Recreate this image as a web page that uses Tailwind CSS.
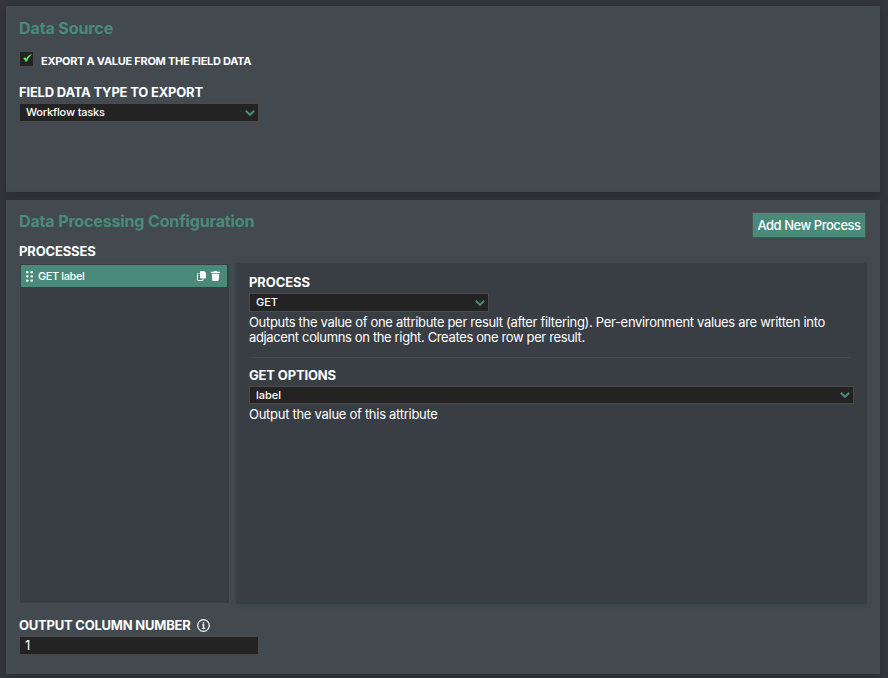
<!DOCTYPE html>
<html lang="en">
<head>
    <meta charset="UTF-8">
    <meta name="viewport" content="width=device-width, initial-scale=1.0">
    <title>Export Configuration</title>
    <script src="https://cdn.jsdelivr.net/npm/@tailwindcss/browser@4"></script>
</head>
<body class="w-[888px] h-[678px] overflow-hidden bg-[#33373f] p-1.5 font-['Inter',sans-serif] text-[13px] leading-[15px] text-white">
    <main class="flex w-[874px] flex-col gap-2">
        <!-- Data source -->
        <section class="h-[186px] bg-[#424a50] pl-[13px] pt-3 shadow-[0_3px_8px_2px_rgba(42,46,48,0.75)]">
            <h2 class="h-5 text-base leading-5 font-bold tracking-[-0.1px] text-[#4a8a79]">Data Source</h2>
            <label class="mt-[13px] flex h-4 items-start gap-[7px]">
                <span class="flex h-4 w-[15px] shrink-0 justify-end border border-[#4b4a49] bg-[#232323] pt-0.5 pr-px">
                    <svg class="h-2 w-[9px]" viewBox="0 0 9 8"><path fill="#62e566" d="M.3 4.200 2 3.300l1.200 1.400C4.400 2.600 6.200.9 8.900.1 6.700 2.200 5.200 4.600 4 7.500H2.500C1.900 6.200 1.200 5.100.3 4.200z" /></svg>
                </span>
                <span class="mt-[3px] text-[11px] font-bold tracking-[-0.28px] whitespace-nowrap">EXPORT A VALUE FROM THE FIELD DATA</span>
            </label>
            <h3 class="mt-[18px] font-bold tracking-[-0.2px] whitespace-nowrap">FIELD DATA TYPE TO EXPORT</h3>
            <div class="mt-[3px] flex h-[19px] w-60 items-center justify-between border border-[#4b4a49] bg-[#232323] pl-1.5 pr-[3px]">
                <span class="text-[11px] font-medium tracking-[-0.17px]">Workflow tasks</span>
                <svg class="h-2 w-2.5" viewBox="0 0 10 8" fill="none" stroke="#4a8a79" stroke-width="2"><path d="M.8 1.800 5 5.800l4.200-4" /></svg>
            </div>
        </section>

        <!-- Data processing configuration -->
        <section class="h-[474px] bg-[#424a50] px-[13px] pt-3 shadow-[0_3px_8px_2px_rgba(42,46,48,0.75)]">
            <div class="flex h-[31px] items-start justify-between">
                <h2 class="-mt-px text-base leading-5 font-bold tracking-[-0.14px] whitespace-nowrap text-[#4a8a79]">Data Processing Configuration</h2>
                <button class="mr-px h-[26px] w-[114px] border border-[#505351] bg-[#4a8a79] font-medium tracking-[-0.47px] whitespace-nowrap">Add New Process</button>
            </div>
            <h3 class="mt-px font-bold tracking-[-0.15px]">PROCESSES</h3>
            <div class="mt-1 flex h-[341px] gap-1.5">
                <div class="w-[211px] border border-[#4a4a4b] bg-[#393d44] p-px pr-0.5">
                    <div class="flex h-[22px] items-center bg-[#4a8a79] pl-[5px] pr-[7px]">
                        <svg class="h-[11px] w-[7px]" viewBox="0 0 7 11" fill="#fff">
                            <rect x="0" y="0" width="2.500" height="2.300" rx=".9" /><rect x="4.500" y="0" width="2.500" height="2.300" rx=".9" />
                            <rect x="0" y="4.200" width="2.500" height="2.300" rx=".9" /><rect x="4.500" y="4.200" width="2.500" height="2.300" rx=".9" />
                            <rect x="0" y="8.400" width="2.500" height="2.300" rx=".9" /><rect x="4.500" y="8.400" width="2.500" height="2.300" rx=".9" />
                        </svg>
                        <span class="ml-[5px] text-[11px] font-medium tracking-[-0.4px]">GET label</span>
                        <svg class="ml-auto h-2.5 w-[9px]" viewBox="0 0 9 10"><path fill="#fff" d="M4 0h3l2 2v4.500a1 1 0 0 1-1 1H4a1 1 0 0 1-1-1V1a1 1 0 0 1 1-1z" /><path fill="none" stroke="#fff" d="M2.400 2.500H1a.5.5 0 0 0-.5.5v6a.5.5 0 0 0 .5.5h4.500a.5.5 0 0 0 .5-.5v-1" /></svg>
                        <svg class="ml-[5px] h-2.5 w-[9px]" viewBox="0 0 9 10" fill="#fff"><path d="M3 0h3l.4.7H9V2H0V.7h2.600zM.8 2.800h7.400l-.5 6.300a1 1 0 0 1-1 .9H2.300a1 1 0 0 1-1-.9z" /></svg>
                    </div>
                </div>
                <div class="w-[631px] bg-[#393d44] pl-[13px] pt-3 shadow-[0_0_4px_rgba(57,60,68,0.5)]">
                    <h3 class="font-bold tracking-[-0.1px]">PROCESS</h3>
                    <div class="mt-[3px] flex h-[19px] w-60 items-center justify-between border border-[#4b4a49] bg-[#232323] pl-1.5 pr-[3px]">
                        <span class="text-[11px] font-medium">GET</span>
                        <svg class="h-2 w-2.5" viewBox="0 0 10 8" fill="none" stroke="#4a8a79" stroke-width="2"><path d="M.8 1.800 5 5.800l4.200-4" /></svg>
                    </div>
                    <p class="mt-[3px] tracking-[-0.32px] whitespace-nowrap">Outputs the value of one attribute per result (after filtering). Per-environment values are written into<br><span class="tracking-[-0.36px]">adjacent columns on the right. Creates one row per result.</span></p>
                    <hr class="mt-3 ml-[3px] w-[599px] border-[#4c4b4b]">
                    <h3 class="mt-2.5 font-bold tracking-[-0.15px]">GET OPTIONS</h3>
                    <div class="mt-[3px] flex h-[18px] w-[605px] items-center justify-between border border-[#4b4a49] bg-[#232323] pl-1.5 pr-[3px]">
                        <span class="text-[11px] font-medium">label</span>
                        <svg class="h-2 w-2.5" viewBox="0 0 10 8" fill="none" stroke="#4a8a79" stroke-width="2"><path d="M.8 1.800 5 5.800l4.200-4" /></svg>
                    </div>
                    <p class="mt-[3px] tracking-[-0.28px]">Output the value of this attribute</p>
                </div>
            </div>
            <div class="mt-3.5 flex h-[15px] items-center gap-[7px]">
                <h3 class="font-bold tracking-[-0.23px] whitespace-nowrap">OUTPUT COLUMN NUMBER</h3>
                <svg class="h-[13px] w-[13px]" viewBox="0 0 13 13"><circle cx="6.500" cy="6.500" r="5.800" fill="none" stroke="#fff" stroke-width="1.200" /><path fill="#fff" d="M5.700 2.900h1.600v1.500H5.700zM5 5.300h2.300v3.600h.9v1H4.900v-1h.9V6.300H5z" /></svg>
            </div>
            <div class="mt-[3px] flex h-[19px] w-60 items-center border border-[#4b4a49] bg-[#232323] pl-[5px]">
                <span>1</span>
            </div>
        </section>
    </main>
</body>
</html>
